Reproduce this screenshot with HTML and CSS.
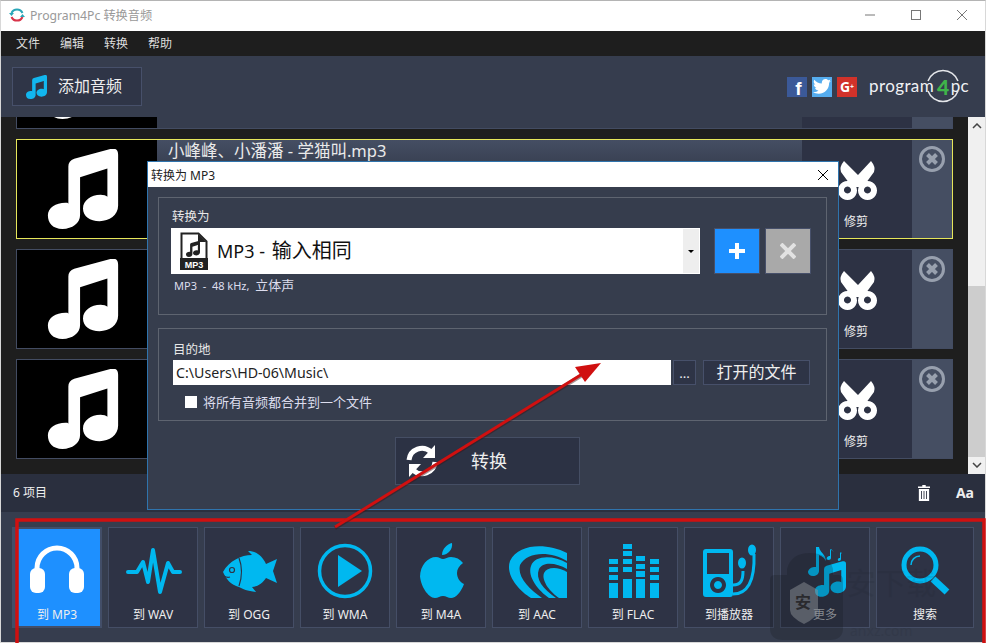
FILE: index.html
```html
<!DOCTYPE html>
<html lang="zh">
<head>
  <meta charset="UTF-8" />
  <title>Program4Pc 转换音频</title>
  <link rel="stylesheet" href="styles.css">
</head>
<body>

<svg class="defs" width="0" height="0">
  <symbol id="note" viewBox="0 0 72 82">
    <path d="M21 66V18q0-6 6-8L64 0q8-2 8 6v52c0 10-9 16-19 16s-17-5-17-13 8-14 18-14c3 0 6 1 7 2V20L33 29v39c0 8-8 14-18 14S0 76 0 68s8-13 18-13c1 0 3 0 3 1z"/>
  </symbol>
  <symbol id="scissors" viewBox="0 0 40 40">
    <path d="M6 0L20 14 33 0Q38 6 36 11L25 26 14 26 3 11Q1 6 6 0z"/>
    <path fill-rule="evenodd" d="M9.500 20a9.500 9.500 0 1 0 .01 0zM9.500 25.500a3.500 3.500 0 1 1-.01 0zM29.500 20a9.500 9.500 0 1 0 .01 0zM29.500 25.500a3.500 3.500 0 1 1-.01 0z"/>
  </symbol>
  <symbol id="remove" viewBox="0 0 26 26">
    <circle cx="13" cy="13" r="11.500" fill="none" stroke="#98a0ae" stroke-width="3"/>
    <path d="M8.500 8.500l9 9M17.500 8.500l-9 9" stroke="#98a0ae" stroke-width="4"/>
  </symbol>
</svg>

<div class="window">

  <header class="titlebar">
    <svg class="app-logo" width="16" height="16" viewBox="0 0 16 16" fill="none" stroke-width="2">
      <path d="M2.500 6a6 6 0 0 1 11 0" stroke="#2aa6b8"/>
      <path d="M13.500 10a6 6 0 0 1-11 0" stroke="#d8344a"/>
      <path d="M0 6h5L2.500 9zM16 10h-5l2.500-3z" fill="#2aa6b8"/>
    </svg>
    <span class="app-title">Program4Pc 转换音频</span>
    <div class="win-buttons">
      <svg width="12" height="12" viewBox="0 0 12 12"><path d="M1 6h10" stroke="#777"/></svg>
      <svg width="12" height="12" viewBox="0 0 12 12"><rect x="1.500" y="1.500" width="9" height="9" fill="none" stroke="#777"/></svg>
      <svg width="12" height="12" viewBox="0 0 12 12"><path d="M1 1l10 10M11 1L1 11" stroke="#777"/></svg>
    </div>
  </header>

  <nav class="menu">
    <a>文件</a>
    <a>编辑</a>
    <a>转换</a>
    <a>帮助</a>
  </nav>

  <div class="toolbar">
    <button class="add-btn">
      <svg width="21" height="24" fill="#12b6ee"><use href="#note"/></svg>
      <span>添加音频</span>
    </button>
    <div class="social">
      <span class="soc soc-f">f</span>
      <span class="soc soc-t">
        <svg width="18" height="15" viewBox="0 0 24 20" fill="#fff"><path d="M24 2.400c-.9.4-1.800.7-2.800.8 1-.6 1.800-1.600 2.200-2.700-1 .6-2 1-3.100 1.200C19.300.7 18 0 16.600 0c-2.700 0-4.900 2.200-4.900 4.900 0 .4 0 .8.100 1.100C7.700 5.800 4.100 3.900 1.700.9c-.4.7-.7 1.600-.7 2.500 0 1.700.9 3.200 2.200 4.100-.8 0-1.600-.2-2.200-.6v.1c0 2.400 1.700 4.400 3.900 4.800-.4.100-.8.200-1.300.2-.3 0-.6 0-.9-.1.600 2 2.400 3.400 4.600 3.400-1.700 1.300-3.800 2.100-6.100 2.100-.4 0-.8 0-1.200-.1 2.200 1.400 4.800 2.200 7.500 2.200 9.100 0 14-7.500 14-14v-.6c1-.7 1.800-1.600 2.500-2.500z"/></svg>
      </span>
      <span class="soc soc-g">G<sup>+</sup></span>
    </div>
    <div class="brand">
      <span>program</span><b>4</b><span>pc</span>
      <svg class="brand-ring" width="34" height="34" viewBox="0 0 34 34" fill="none" stroke="#e4e6ea" stroke-width="1.500">
        <path d="M2 12a16 16 0 0 1 30 0M2 22a16 16 0 0 0 30 0"/>
      </svg>
    </div>
  </div>

  <div class="list-wrap">
    <div class="list">
      <div class="row row-cut">
        <div class="thumb"><svg width="72" height="80" fill="#fff"><use href="#note"/></svg></div>
        <div class="info"></div>
        <div class="trim"></div>
        <div class="del"></div>
      </div>
      <div class="row row-active">
        <div class="thumb"><svg width="72" height="80" fill="#fff"><use href="#note"/></svg></div>
        <div class="info">小峰峰、小潘潘 - 学猫叫.mp3</div>
        <div class="trim"><svg width="40" height="40" fill="#fff"><use href="#scissors"/></svg><span>修剪</span></div>
        <div class="del"><svg width="26" height="26"><use href="#remove"/></svg></div>
      </div>
      <div class="row">
        <div class="thumb"><svg width="72" height="80" fill="#fff"><use href="#note"/></svg></div>
        <div class="info"></div>
        <div class="trim"><svg width="40" height="40" fill="#fff"><use href="#scissors"/></svg><span>修剪</span></div>
        <div class="del"><svg width="26" height="26"><use href="#remove"/></svg></div>
      </div>
      <div class="row">
        <div class="thumb"><svg width="72" height="80" fill="#fff"><use href="#note"/></svg></div>
        <div class="info"></div>
        <div class="trim"><svg width="40" height="40" fill="#fff"><use href="#scissors"/></svg><span>修剪</span></div>
        <div class="del"><svg width="26" height="26"><use href="#remove"/></svg></div>
      </div>
    </div>
    <div class="scrollbar">
      <svg width="10" height="6" viewBox="0 0 10 6"><path d="M1 5l4-4 4 4" fill="none" stroke="#444" stroke-width="1.500"/></svg>
      <div class="scroll-thumb"></div>
      <svg width="10" height="6" viewBox="0 0 10 6"><path d="M1 1l4 4 4-4" fill="none" stroke="#444" stroke-width="1.500"/></svg>
    </div>
  </div>

  <div class="status">
    <span>6 项目</span>
    <div class="status-tools">
      <svg width="12" height="16" viewBox="0 0 14 16" preserveAspectRatio="none" fill="#fff"><path d="M5 0h4v1.500h5V3H0V1.500h5zM1 4h12v12H1zM3.500 6v8h1V6zM6.500 6v8h1V6zM9.500 6v8h1V6z" fill-rule="evenodd"/></svg>
      <b>Aa</b>
    </div>
  </div>

  <div class="formats">
    <div class="tile tile-on">
      <svg width="60" height="60" viewBox="0 0 60 60" fill="#fff">
        <path d="M10 32V27a20 20 0 0 1 40 0V32" fill="none" stroke="#fff" stroke-width="5"/>
        <rect x="3" y="27" width="15" height="25" rx="6"/><rect x="42" y="27" width="15" height="25" rx="6"/>
      </svg>
      <span>到 MP3</span>
    </div>
    <div class="tile">
      <svg width="60" height="60" viewBox="0 0 60 60" fill="none" stroke="#00b8f0" stroke-width="4" stroke-linecap="round" stroke-linejoin="round">
        <path d="M5 31h9l6-10 5 20 5-32 7 42 8-29 5 9h7"/>
      </svg>
      <span>到 WAV</span>
    </div>
    <div class="tile">
      <svg width="60" height="60" viewBox="0 0 60 60" fill="#00b8f0">
        <path d="M4 31C10 20 22 14 33 14L29 10C38 10 44 16 47 23L58 18 54 30 58 42 47 37C44 42 38 46 33 46L37 51C28 50 24 48 20 46 12 44 7 38 4 31z"/>
        <circle cx="13" cy="29" r="2.500" fill="none" stroke="#2e3345" stroke-width="1.200"/>
        <path d="M20 17q5 13 0 28M5 35q3 2 6 1" fill="none" stroke="#2e3345" stroke-width="1.200"/>
      </svg>
      <span>到 OGG</span>
    </div>
    <div class="tile">
      <svg width="60" height="60" viewBox="0 0 60 60" fill="#00b8f0">
        <circle cx="30" cy="30" r="25.500" fill="none" stroke="#00b8f0" stroke-width="3.500"/>
        <path d="M23 14l24 16-24 16z"/>
      </svg>
      <span>到 WMA</span>
    </div>
    <div class="tile">
      <svg width="60" height="60" viewBox="0 0 60 60" fill="#00b8f0">
        <path d="M31 14c0-6 5-11 10-12 1 6-4 12-10 12z"/>
        <path d="M9 36c0-12 8-20 16-20 3 0 5 2 7 2s5-2 8-2c5 0 9 2 12 6-4 3-6 6-6 10 0 5 3 9 7 11-3 8-8 14-13 14-3 0-5-2-8-2s-5 2-8 2c-7 0-15-13-15-23z"/>
      </svg>
      <span>到 M4A</span>
    </div>
    <div class="tile">
      <svg width="60" height="60" viewBox="0 0 60 60" fill="#00b8f0">
        <path d="M60 12C40 2 12 2 3 20-2 34 12 50 24 57H35C22 48 10 36 13 24 20 10 44 10 60 20z"/>
        <path d="M60 22C46 14 28 14 24 25 20 36 32 50 42 57H49C36 48 28 38 32 28 36 20 50 22 60 28z"/>
        <path d="M60 31C50 25 40 26 37 32 34 40 44 52 52 57H60z"/>
      </svg>
      <span>到 AAC</span>
    </div>
    <div class="tile">
      <svg width="60" height="60" viewBox="0 0 60 60" fill="#00b8f0">
        <path d="M6 18h9v5H6zM6 26h9v5H6zM6 34h9v5H6zM6 42h9v15H6z"/>
        <path d="M20 3h9v5h-9zM20 10h9v5h-9zM20 18h9v5h-9zM20 26h9v5h-9zM20 38h9v19h-9z"/>
        <path d="M33 15h9v5h-9zM33 23h9v5h-9zM33 30h9v6h-9zM33 38h9v19h-9z"/>
        <path d="M47 18h9v5h-9zM47 26h9v5h-9zM47 34h9v5h-9zM47 42h9v15h-9z"/>
      </svg>
      <span>到 FLAC</span>
    </div>
    <div class="tile">
      <svg width="60" height="60" viewBox="0 0 60 60" fill="#00b8f0">
        <path fill-rule="evenodd" d="M7 8h24q3 0 3 3v42q0 3-3 3H7q-3 0-3-3V11q0-3 3-3zM8 12v21h22V12zM19 36a8 8 0 1 0 .01 0zM19 40a4 4 0 1 1-.01 0z"/>
        <path d="M34 44c8 0 10-5 10-14M34 53c14 0 22-12 21-40" fill="none" stroke="#00b8f0" stroke-width="3"/>
        <ellipse cx="53" cy="9" rx="4" ry="5.500"/><ellipse cx="43" cy="22" rx="4" ry="5.500"/>
      </svg>
      <span>到播放器</span>
    </div>
    <div class="tile">
      <svg width="60" height="60" viewBox="0 0 60 60" fill="#00b8f0">
        <use href="#note" x="20" y="20" width="31" height="36"/>
        <path d="M24 6v24c0 3-3 5-6 5s-5-2-5-4 3-5 6-5h2V6z"/>
        <path d="M24 6c1 6 6 6 7 14-2-4-5-5-7-6z"/>
        <path d="M36 8v9c0 1-1 2-3 2s-2-3 1-4h1V8l4 3zM46 11v7c0 1-1 2-2 2s-2-2 0-3h1v-6l2 2z"/>
      </svg>
      <span class="label-dim">更多</span>
    </div>
    <div class="tile tile-wide">
      <svg width="60" height="60" viewBox="0 0 60 60" fill="none" stroke="#00b8f0">
        <circle cx="25" cy="24" r="16" stroke-width="5"/>
        <path d="M16 24a9 9 0 0 1 9-9" stroke-width="1.500"/>
        <path d="M38 38l14 13" stroke-width="7"/>
      </svg>
      <span>搜索</span>
    </div>
  </div>

  <div class="dialog">
    <div class="dialog-title">
      <span>转换为 MP3</span>
      <svg width="12" height="12" viewBox="0 0 12 12"><path d="M1 1l10 10M11 1L1 11" stroke="#000"/></svg>
    </div>
    <div class="dialog-body">
      <section class="group group-to">
        <label class="group-label">转换为</label>
        <div class="pick-row">
          <div class="select">
            <svg width="28" height="38" viewBox="0 0 28 38">
              <path d="M1.500 27V1.500h17l8 8V27" fill="none" stroke="#222" stroke-width="2"/>
              <path d="M18 2v8h8z" fill="#222"/>
              <rect y="26" width="28" height="12" fill="#222"/>
              <text x="14" y="36" class="file-tag" text-anchor="middle">MP3</text>
              <use href="#note" x="6" y="9" width="14" height="16" fill="#222"/>
            </svg>
            <span class="select-text">MP3 - <span class="select-cjk">输入相同</span></span>
            <span class="select-arrow"></span>
          </div>
          <button class="sq-btn sq-add">
            <svg width="16" height="16" viewBox="0 0 16 16"><path d="M8 0v16M0 8h16" stroke="#fff" stroke-width="4"/></svg>
          </button>
          <button class="sq-btn sq-del">
            <svg width="16" height="16" viewBox="0 0 16 16"><path d="M1 1l14 14M15 1L1 15" stroke="#e2e2e2" stroke-width="4"/></svg>
          </button>
        </div>
        <p class="fmt-info">MP3 &nbsp;-&nbsp; 48 kHz, &nbsp;<span class="fmt-cjk">立体声</span></p>
      </section>

      <section class="group group-dest">
        <label class="group-label">目的地</label>
        <div class="path-row">
          <div class="path-input">C:\Users\HD-06\Music\</div>
          <button class="dark-btn dots">...</button>
          <button class="dark-btn open">打开的文件</button>
        </div>
        <div class="merge">
          <span class="check"></span>
          将所有音频都合并到一个文件
        </div>
      </section>

      <button class="convert">
        <svg width="34" height="34" viewBox="0 0 34 34" fill="#fff">
          <path d="M4 16A13 13 0 0 1 26 8" fill="none" stroke="#fff" stroke-width="5"/>
          <path d="M30 1v13H18z"/>
          <path d="M30 18A13 13 0 0 1 8 26" fill="none" stroke="#fff" stroke-width="5"/>
          <path d="M4 33V20h12z"/>
        </svg>
        <span>转换</span>
      </button>
    </div>
  </div>

  <svg class="marks" width="986" height="643" viewBox="0 0 986 643">
    <path d="M770 580q0-5 5-5h12v-6q4-16 23-16t23 16v6h-46v0h51q5 0 5 5v48q0 12-13 12h-47q-13 0-13-12z" fill="#14161d" opacity=".22"/>
    <path d="M790 590l14-8 14 8v20q0 7-14 14-14-7-14-14z" fill="#8c8f96" opacity=".5"/>
    <text x="803" y="608" class="wm-char" text-anchor="middle">安</text>
    <g opacity=".09">
      <text x="846" y="594" class="wm-text">安下载</text>
      <text x="850" y="636" class="wm-sub">anxz.com</text>
    </g>
    <path d="M17 643V520H984V643" fill="none" stroke="#d01010" stroke-width="3.500"/>
    <path d="M335 527L592 368" stroke="#3a1518" stroke-width="4" opacity=".45" transform="translate(0 1)"/>
    <path d="M335 527L592 368" stroke="#d01010" stroke-width="3"/>
    <path d="M601 363L575 367 585 382z" fill="#d01010"/>
  </svg>
</div>

</body>
</html>
```

FILE: styles.css
```css
* {
  box-sizing: border-box;
  margin: 0;
  padding: 0;
}

html, body {
  width: 986px;
  height: 643px;
  overflow: hidden;
  background: #cfcfcf;
}

body {
  font-family: "Noto Sans", "Noto Sans CJK SC", sans-serif;
  color: #fff;
  font-size: 12px;
}

button {
  font-family: inherit;
  color: inherit;
  cursor: pointer;
}

.defs {
  position: absolute;
}

.window {
  position: relative;
  width: 986px;
  height: 643px;
  display: flex;
  flex-direction: column;
  border-top: 1px solid #b4b4b4;
  border-left: 1px solid #d8d8d8;
  border-right: 1px solid #d8d8d8;
  border-bottom: 1px solid #d8d8d8;
}

/* title bar */
.titlebar {
  height: 30px;
  background: #fff;
  display: flex;
  align-items: center;
  padding-left: 8px;
  flex-shrink: 0;
}

.app-logo {
  margin-bottom: 2px;
}

.app-title {
  margin-left: 5px;
  margin-bottom: 3px;
  color: #999;
  font-size: 12.2px;
}

.win-buttons {
  margin-left: auto;
  display: flex;
  gap: 34px;
  padding-right: 17px;
  margin-bottom: 2px;
}

.win-buttons svg {
  display: block;
}

/* menu */
.menu {
  height: 25px;
  background: #1e1e1e;
  display: flex;
  align-items: center;
  gap: 20px;
  padding: 0 0 1px 15px;
  flex-shrink: 0;
}

.menu a {
  color: #ddd;
  font-size: 12px;
}

/* toolbar */
.toolbar {
  height: 61px;
  background: #363d4e;
  display: flex;
  align-items: center;
  padding: 0 16px 0 11px;
  flex-shrink: 0;
}

.add-btn {
  width: 130px;
  height: 39px;
  background: #2f3547;
  border: 1px solid #47506a;
  display: flex;
  align-items: center;
  gap: 11px;
  padding-left: 13px;
  font-size: 16px;
  color: #eee;
}

.add-btn span {
  padding-bottom: 3px;
}

.social {
  margin-left: auto;
  display: flex;
  gap: 5px;
}

.soc {
  width: 20px;
  height: 20px;
  display: flex;
  align-items: center;
  justify-content: center;
  font-weight: bold;
  color: #fff;
  line-height: 1;
}

.soc-f {
  background: #3b5998;
  font-family: "Liberation Sans", sans-serif;
  font-size: 19px;
  padding-top: 3px;
  padding-left: 3px;
}

.soc-t {
  background: #55acee;
}

.soc-g {
  background: #d1322a;
  font-size: 14px;
}

.soc-g sup {
  font-size: 7px;
}

.brand {
  position: relative;
  margin-left: 12px;
  width: 100px;
  display: flex;
  align-items: center;
  font-family: "Lato", sans-serif;
  font-size: 17px;
  color: #f0f1f4;
  letter-spacing: .4px;
}

.brand span {
  margin-top: -3px;
}

.brand b {
  color: #3fb54a;
  font-size: 21px;
  font-weight: 900;
  margin: 0 1px 0 3px;
}

.brand-ring {
  position: absolute;
  left: 57px;
  top: -5px;
}

/* file list */
.list-wrap {
  height: 357px;
  background: #1e1e1e;
  display: flex;
  overflow: hidden;
  flex-shrink: 0;
}

.list {
  flex: 1;
  padding: 0 15px 0 15px;
}

.row {
  height: 100px;
  margin-bottom: 10px;
  display: flex;
  border: 1px solid #434c62;
  background: #363d4e;
}

.row-cut {
  margin-top: -88px;
}

.row-active {
  border-color: #e6e65a;
}

.thumb {
  width: 140px;
  background: #000;
  display: flex;
  align-items: center;
  justify-content: center;
}

.thumb svg {
  margin-right: 9px;
}

.info {
  flex: 1;
  padding: 0 0 0 11px;
  font-size: 16.5px;
  line-height: 22px;
  color: #eaeaea;
  background: linear-gradient(#454e63, #363d4e 30px);
}

.trim {
  width: 110px;
  background: #2d3244;
  display: flex;
  flex-direction: column;
  align-items: center;
  padding-top: 21px;
  padding-left: 2px;
  gap: 12px;
}

.trim span {
  font-size: 12px;
  line-height: 18px;
  color: #eee;
  margin-left: -4px;
}

.del {
  width: 40px;
  background: #454e62;
  display: flex;
  justify-content: center;
  padding-top: 6px;
}

.scrollbar {
  width: 17px;
  background: #f0f0f0;
  display: flex;
  flex-direction: column;
  align-items: center;
  padding-top: 6px;
  padding-bottom: 6px;
}

.scroll-thumb {
  width: 100%;
  height: 171px;
  margin-top: 157px;
  margin-bottom: 5px;
  background: #cdcdcd;
}

/* status */
.status {
  height: 38px;
  background: #2a2f3e;
  display: flex;
  align-items: center;
  justify-content: space-between;
  padding: 0 11px 0 12px;
  flex-shrink: 0;
  color: #eee;
}

.status > span {
  padding-bottom: 2px;
}

.status-tools {
  display: flex;
  align-items: center;
  gap: 26px;
}

.status-tools b {
  font-size: 14px;
  padding-bottom: 2px;
}

/* format tiles */
.formats {
  flex: 1;
  background: #363d4e;
  display: flex;
  gap: 6px;
  padding: 15px 0 0 11px;
}

.tile {
  width: 90px;
  height: 101px;
  background: #2e3345;
  border: 1px solid #454e66;
  display: flex;
  flex-direction: column;
  align-items: center;
  padding-top: 13px;
  gap: 5px;
}

.tile span {
  font-size: 12px;
  line-height: 18px;
  color: #eee;
}

.tile .label-dim {
  color: #a9acb3;
}

.tile-wide {
  width: 98px;
}

.tile-on {
  background: #1e90ff;
  border: 2px solid #434e68;
  border-left-width: 5px;
  padding-top: 12px;
}

.tile-on svg,
.tile-on span {
  margin-left: -3px;
}

/* convert dialog */
.dialog {
  position: absolute;
  left: 146px;
  top: 160px;
  width: 692px;
  height: 349px;
  background: #363d4d;
  border: 1px solid #2f74ad;
  display: flex;
  flex-direction: column;
}

.dialog-title {
  height: 25px;
  background: #fff;
  color: #222;
  display: flex;
  align-items: center;
  justify-content: space-between;
  padding: 0 9px 0 3px;
  flex-shrink: 0;
}

.dialog-title span {
  font-size: 12px;
}

.dialog-body {
  flex: 1;
  display: flex;
  flex-direction: column;
  padding: 10px 11px 0 10px;
}

.group {
  border: 1px solid #5e6470;
  padding: 0 14px;
}

.group-to {
  height: 118px;
  margin-bottom: 13px;
  padding-left: 12px;
}

.group-to .group-label {
  margin-left: 1px;
}

.group-dest {
  height: 93px;
}

.group-dest .group-label {
  margin-top: 12px;
}

.group-label {
  display: block;
  font-size: 12.5px;
  line-height: 18px;
  margin-top: 10px;
  color: #e8e8e8;
}

.pick-row {
  display: flex;
  align-items: stretch;
  height: 46px;
  margin-top: 2px;
}

.select {
  width: 529px;
  background: #fff;
  border: 1px solid #fff;
  display: flex;
  align-items: center;
  padding-left: 8px;
  margin-right: 14px;
  color: #111;
}

.file-tag {
  fill: #fff;
  font-size: 9px;
  font-weight: bold;
  font-family: "Liberation Sans", sans-serif;
}

.select-text {
  margin-left: 9px;
  margin-bottom: 3px;
  font-size: 18px;
}

.select-cjk {
  font-size: 20px;
  margin-left: 2px;
}

.select-arrow {
  margin-left: auto;
  width: 16px;
  align-self: stretch;
  background: #eee;
  position: relative;
}

.select-arrow::after {
  content: "";
  position: absolute;
  left: 5px;
  top: 21px;
  border-left: 3px solid transparent;
  border-right: 3px solid transparent;
  border-top: 3px solid #000;
}

.sq-btn {
  width: 46px;
  border: 1px solid #47506a;
  display: flex;
  align-items: center;
  justify-content: center;
}

.sq-add {
  background: #1e90ff;
  margin-right: 5px;
}

.sq-del {
  background: #a9a9a9;
}

.fmt-info {
  font-size: 11px;
  line-height: 20px;
  margin: 1px 0 0 3px;
  color: #dde;
}

.fmt-cjk {
  font-size: 13px;
}

.path-row {
  display: flex;
  height: 25px;
  margin-top: 1px;
}

.path-input {
  width: 498px;
  background: #fff;
  color: #222;
  font-size: 14.2px;
  line-height: 25px;
  padding-left: 3px;
}

.dark-btn {
  background: #2e3446;
  border: 1px solid #47506a;
  color: #eee;
}

.dots {
  width: 23px;
  margin-left: 2px;
}

.open {
  width: 107px;
  margin-left: 7px;
  font-size: 16px;
  line-height: 1;
  padding-bottom: 2px;
}

.merge {
  display: flex;
  align-items: center;
  gap: 6px;
  margin: 8px 0 0 12px;
  font-size: 13px;
  line-height: 18px;
  color: #dde;
}

.check {
  width: 12px;
  height: 12px;
  background: #fff;
}

.convert {
  align-self: flex-start;
  width: 185px;
  height: 48px;
  margin: 16px 0 0 237px;
  background: #2c3244;
  border: 1px solid #454e64;
  display: flex;
  align-items: center;
  padding-left: 9px;
  gap: 32px;
  font-size: 18px;
}

.convert span {
  color: #eee;
  padding-bottom: 2px;
}

/* annotations drawn over the screenshot */
.marks {
  position: absolute;
  left: -1px;
  top: -1px;
  pointer-events: none;
}

.wm-char {
  font-size: 16px;
  font-weight: bold;
  fill: #2a2a2e;
}

.wm-text {
  font-size: 30px;
  fill: #14161d;
}

.wm-sub {
  font-size: 14px;
  fill: #14161d;
}
```
